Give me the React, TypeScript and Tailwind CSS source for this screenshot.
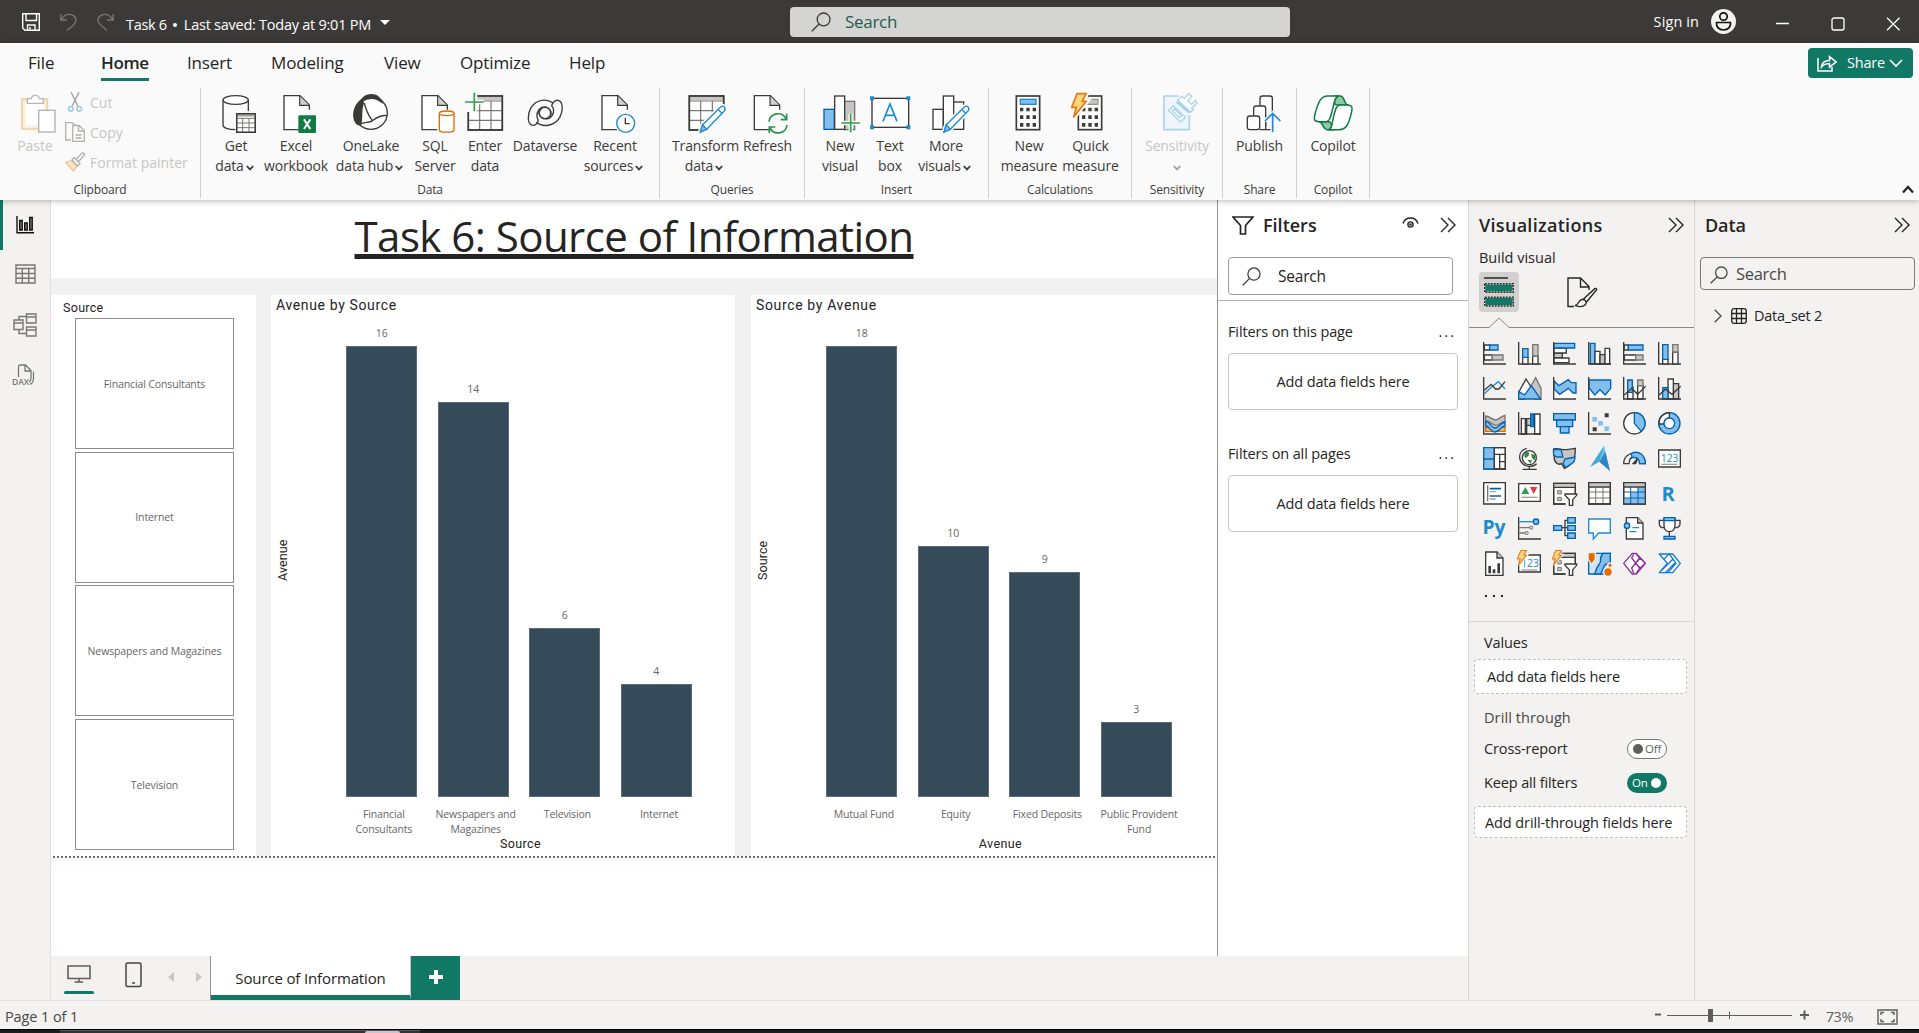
import type { ReactNode } from "react";

const INK = "#3b3a39";
const BLUE = "#83beec";
const EDGE = "#1e8bcd";
const DEEP = "#0063b1";
const GREEN = "#2f9e4f";
const TEAL = "#117865";

/* ---------- shared glyphs ---------- */

function Ico({ children }: { children: ReactNode }) {
  return (
    <svg width="40" height="40" viewBox="0 0 120 120" fill="none" stroke={INK} strokeWidth="4" className="shrink-0 overflow-visible">
      {children}
    </svg>
  );
}

function Page({ x = 19 }: { x?: number }) {
  return (
    <g transform={`translate(${x - 19} 0)`}>
      <path d="M97 52V37L69 8H21V110H97Z" fill="#fff" stroke="none" />
      <path d="M97 50V36L69 8H21V110H68" />
      <path d="M68 9V37H96" fill="#d2d0ce" strokeWidth="3.5" />
    </g>
  );
}

function Plus({ x, y }: { x: number; y: number }) {
  return (
    <g>
      <path d={`M${x - 28} ${y}h56M${x} ${y - 28}v56`} stroke="#fafafa" strokeWidth="13" />
      <path d={`M${x - 28} ${y}h56M${x} ${y - 28}v56`} stroke={GREEN} strokeWidth="5" />
    </g>
  );
}

function Pencil({ x }: { x: number }) {
  return (
    <g transform={`translate(${x} 0)`}>
      <path d="M43 117l7-22L104 42q6-5 11 0 5 6 0 12L62 109Z" fill="#fff" stroke="#fafafa" strokeWidth="14" />
      <path d="M43 117l7-22L104 42q6-5 11 0 5 6 0 12L62 109Z" fill="#fff" stroke={EDGE} strokeLinejoin="round" />
      <path d="M43 117l7-22 12 14Z" fill={BLUE} stroke={EDGE} />
      <path d="M97 50l11 11" stroke={EDGE} />
    </g>
  );
}

function Bolt() {
  return <path d="M18 2H46L33 25H46L8 72L16 43H2Z" fill="#fcd57d" stroke="#e07b1a" strokeWidth="5" strokeLinejoin="round" />;
}

function Caret({ color = INK }: { color?: string }) {
  return (
    <svg width="8" height="6" viewBox="0 0 8 6" fill="none" stroke={color} strokeWidth="1.8" className="mt-1 shrink-0">
      <path d="M.8 1L4 4.4 7.2 1" />
    </svg>
  );
}

function Magnifier({ size, color = INK }: { size: number; color?: string }) {
  return (
    <svg width={size} height={size} viewBox="0 0 20 20" fill="none" stroke={color} strokeWidth="1.3" className="shrink-0">
      <circle cx="12.6" cy="7.4" r="6.4" />
      <path d="M8 12L.8 19.2" />
    </svg>
  );
}

function DoubleChevron() {
  return (
    <svg width="16" height="16" viewBox="0 0 16 16" fill="none" stroke="#252423" strokeWidth="1.4" className="shrink-0">
      <path d="M1 1l7 7-7 7M8 1l7 7-7 7" />
    </svg>
  );
}

/* ---------- ribbon icons ---------- */

const icons: Record<string, ReactNode> = {
  getData: (
    <Ico>
      <path d="M21 22V97C21 104 36 110 58 110M97 22V54" />
      <ellipse cx="59" cy="21" rx="38" ry="13" fill="#fff" />
      <rect x="62" y="62" width="56" height="56" fill="#fff" />
      <path d="M62 66H118" strokeWidth="9" stroke="#a19f9d" />
      <path d="M62 76H118M62 90H118M62 104H118M80 76V118M99 76V118" stroke="#797775" strokeWidth="3" />
      <rect x="62" y="62" width="56" height="56" />
    </Ico>
  ),
  excel: (
    <Ico>
      <Page x={22} />
      <rect x="67" y="67" width="53" height="53" rx="3" fill="#107c41" stroke="none" />
      <path d="M84 79L103 108M103 79L84 108" stroke="#fff" strokeWidth="6" />
    </Ico>
  ),
  oneLake: (
    <Ico>
      <circle cx="60" cy="60" r="49" fill="#fff" />
      <path d="M30 26C38 2 70 0 84 14C90 20 91 24 92 28C74 12 50 14 30 26Z" fill={INK} />
      <path d="M32 24C10 34 2 66 14 88C18 94 22 96 27 95C36 84 28 56 36 34C38 28 36 24 32 24Z" fill={INK} />
      <path d="M40 30C46 56 54 70 64 82M26 95C40 84 52 92 66 82C84 68 94 66 108 68" />
    </Ico>
  ),
  sql: (
    <Ico>
      <Page />
      <path d="M73 62V110C73 120 117 120 117 110V62" fill="#fff" stroke="#fafafa" strokeWidth="12" />
      <path d="M73 62V110C73 120 117 120 117 110V62" fill="#fff" stroke="#e06c00" />
      <ellipse cx="95" cy="61" rx="22" ry="7" fill="#fff" stroke="#e06c00" />
    </Ico>
  ),
  enter: (
    <Ico>
      <rect x="10" y="9" width="102" height="102" fill="#fff" />
      <path d="M10 16H112" strokeWidth="11" stroke="#c8c6c4" />
      <path d="M10 24H112M10 53H112M10 82H112M44 24V111M78 24V111" stroke="#797775" strokeWidth="3.5" />
      <rect x="10" y="9" width="102" height="102" strokeWidth="5" />
      <path d="M-2 -2H37V57H-2Z" fill="#fafafa" stroke="none" />
      <Plus x={28} y={27} />
    </Ico>
  ),
  dataverse: (
    <Ico>
      <path d="M84 30C66 16 34 18 18 44C6 66 8 92 20 96C30 100 38 90 40 82C28 62 44 38 64 42" />
      <path d="M34 88C52 104 88 100 104 74C116 52 114 26 100 22C90 20 82 30 80 38C94 56 80 82 58 77" />
      <circle cx="60" cy="60" r="17" />
      <path d="M64 42C78 46 82 60 76 72M56 78C42 74 38 60 44 48" strokeWidth="3" />
    </Ico>
  ),
  recent: (
    <Ico>
      <Page />
      <circle cx="92" cy="91" r="32" fill="#fafafa" stroke="none" />
      <circle cx="92" cy="91" r="27" fill="#fff" stroke={EDGE} />
      <path d="M91 74V92H104" />
    </Ico>
  ),
  transform: (
    <Ico>
      <rect x="10" y="9" width="103" height="102" fill="#fff" />
      <path d="M10 16H113" strokeWidth="11" stroke="#c8c6c4" />
      <path d="M10 24H113M10 53H113M10 82H113M44 24V111M79 24V111" stroke="#797775" strokeWidth="3.5" />
      <rect x="10" y="9" width="103" height="102" strokeWidth="5" />
      <path d="M66 113H116V40Z" fill="#fafafa" stroke="#fafafa" />
      <Pencil x={0} />
    </Ico>
  ),
  refresh: (
    <Ico>
      <Page x={17} />
      <circle cx="91" cy="91" r="33" fill="#fafafa" stroke="none" />
      <path d="M63 86C66 58 104 54 114 78M116 62V80H98M117 96C114 124 76 128 66 104M64 120V102H82" stroke="#2f9150" strokeWidth="5" />
    </Ico>
  ),
  newVisual: (
    <Ico>
      <rect x="73" y="25" width="31" height="85" fill="#c8c6c4" stroke="#797775" />
      <rect x="12" y="49" width="31" height="60" fill={BLUE} stroke={DEEP} />
      <rect x="44" y="9" width="30" height="100" fill="#fff" />
      <Plus x={92} y={90} />
    </Ico>
  ),
  textBox: (
    <Ico>
      <rect x="6" y="16" width="110" height="87" fill="#fff" />
      <path d="M0 10h12v12H0zM109 10h12v12h-12zM0 97h12v12H0zM109 97h12v12h-12z" fill={EDGE} stroke="none" />
      <path d="M39 85L60 33L81 85M46 67H74" stroke={EDGE} strokeWidth="5" />
    </Ico>
  ),
  moreVisuals: (
    <Ico>
      <g transform="translate(3 0)">
        <rect x="18" y="49" width="31" height="60" fill="#fff" />
        <rect x="79" y="27" width="31" height="82" fill="#fff" />
        <rect x="49" y="9" width="31" height="100" fill="#fff" />
        <Pencil x={8} />
      </g>
    </Ico>
  ),
  measure: (
    <Ico>
      <Calc display={EDGE} fill={BLUE} />
    </Ico>
  ),
  quick: (
    <Ico>
      <Calc display="#979593" fill="#c8c6c4" />
      <path d="M18 2H46L33 25H46L8 72L16 43H2Z" fill="#fafafa" stroke="#fafafa" strokeWidth="16" />
      <Bolt />
    </Ico>
  ),
  sensitivity: (
    <Ico>
      <g stroke="#a9d2ec" strokeWidth="4">
        <path d="M64 9H21V110H97V66" fill="#eff6fb" strokeWidth="5" />
        <path d="M35 53L49 39L85 73L71 87Z" fill="#fff" />
        <path d="M46 54L52 48L74 68L68 74Z" />
        <path d="M62 22L74 10L82 16L94 2L104 10L92 24L104 34L116 22L120 30L104 46L110 50L100 58Z" fill="#fff" />
        <path d="M60 26L98 58" strokeWidth="10" />
      </g>
    </Ico>
  ),
  publish: (
    <Ico>
      <path d="M60 38V16q0-7 7-7H90q7 0 7 7V60" fill="#fff" />
      <path d="M41 68V46q0-7 7-7H70q7 0 7 7V100" fill="#fff" />
      <rect x="22" y="69" width="37" height="41" rx="7" fill="#fff" />
      <path d="M59 110H92M77 82V110" />
      <path d="M98 118V64M75 84L98 61L121 84" stroke="#fafafa" strokeWidth="12" />
      <path d="M98 118V64M75 84L98 61L121 84" stroke={EDGE} strokeWidth="5" />
    </Ico>
  ),
  copilot: (
    <Ico>
      <g stroke="#0f7a45" strokeWidth="4.5" strokeLinejoin="round">
        <path d="M64 9H82C96 9 92 36 106 36H74C60 36 60 12 74 9Z" fill="#8fc7a6" />
        <path d="M24 86H50L66 110H44C28 110 32 88 18 86Z" fill="#8fc7a6" />
        <path d="M76 9H44C22 9 16 30 8 56C0 82 4 86 20 86H38C50 86 52 74 58 52C64 26 66 12 76 9Z" fill="#fff" />
        <path d="M50 110H78C102 110 108 88 114 64C121 40 116 36 100 36H82C70 36 68 48 62 70C56 94 58 108 46 110Z" fill="#fff" />
      </g>
    </Ico>
  ),
};

function Calc({ display, fill }: { display: string; fill: string }) {
  return (
    <g>
      <rect x="22" y="9" width="70" height="101" fill="#fff" strokeWidth="5" />
      <rect x="34" y="19" width="47" height="15" fill={fill} stroke={display} />
      {[44, 67, 90].map((y) => (
        <path key={y} d={`M33 ${y}h10v11h-10zM52 ${y}h10v11h-10zM71 ${y}h10v11h-10z`} fill={INK} stroke="none" />
      ))}
    </g>
  );
}

/* ---------- ribbon ---------- */

function Btn({ icon, lines, w, caret, muted }: { icon: string; lines: string[]; w: string; caret?: boolean; muted?: boolean }) {
  return (
    <div className={`flex shrink-0 flex-col items-center text-[14px] leading-5 whitespace-nowrap ${w} ${muted ? "text-[#c8c6c4]" : "text-[#3b3a39]"}`}>
      {icons[icon]}
      <div className="mt-[3px] tracking-[-0.15px]">{lines[0]}</div>
      <div className={`flex h-5 items-center gap-[2px] tracking-[-0.15px] ${caret && !muted ? "pr-[3px]" : ""}`}>
        {lines[1] && <span>{lines[1]}</span>}
        {caret && <Caret color={muted ? "#a19f9d" : INK} />}
      </div>
    </div>
  );
}

function Group({ label, w, pad, children }: { label: string; w: string; pad?: string; children: ReactNode }) {
  return (
    <div className={`flex h-[110px] shrink-0 flex-col border-r border-[#d2d0ce] ${w}`}>
      <div className={`flex h-[94px] shrink-0 pt-[5px] ${pad ?? ""}`}>{children}</div>
      <div className="text-center text-[12px] leading-4 tracking-[-0.15px] text-[#3b3a39]">{label}</div>
    </div>
  );
}

function Ribbon() {
  return (
    <div className="relative z-10 h-[157px] bg-[#fafafa] shadow-[0_1px_6px_rgba(0,0,0,0.28)]">
      <div className="flex h-[45px] justify-between">
        <div className="flex pl-[28px] text-[17px] leading-10 tracking-[-0.15px] text-[#252423]">
          <div className="w-[73px]">File</div>
          <div className="w-[86px]">
            <div className="h-[38px] w-12 border-b-3 border-[#117865] font-semibold tracking-[-0.37px]">Home</div>
          </div>
          <div className="w-[84px]">Insert</div>
          <div className="w-[113px]">Modeling</div>
          <div className="w-[76px]">View</div>
          <div className="w-[109px]">Optimize</div>
          <div>Help</div>
        </div>
        <div className="mt-[5px] mr-[6px] flex h-[30px] w-[105px] items-center rounded bg-[#117865] pl-[9px] text-[14.5px] tracking-[-0.2px] text-white">
          <svg width="20" height="18" viewBox="0 0 20 18" fill="none" stroke="#fff" strokeWidth="1.5">
            <path d="M1 4V17H15V13M4.500 13C5 8.500 8 6.500 12.500 6.500V2.500L19 8 12.500 13.200V9.500C9 9.500 6.500 10.500 4.500 13Z" />
          </svg>
          <span className="ml-[10px]">Share</span>
          <svg width="14" height="9" viewBox="0 0 14 9" fill="none" stroke="#fff" strokeWidth="1.6" className="ml-1">
            <path d="M1 1l6 6 6-6" />
          </svg>
        </div>
      </div>
      <div className="flex">
        <Group label="Clipboard" w="w-[201px]" pad="pl-[13px]">
          <div className="flex w-[44px] flex-col items-center text-[14px] leading-5 text-[#c8c6c4]">
            <Ico>
              <g transform="translate(3 0)">
                <path d="M18 18H94V108H18Z" fill="#fbeed6" stroke="#f3cda5" strokeWidth="5" />
                <path d="M28 28H84V98H28Z" fill="#fff" stroke="none" />
                <path d="M34 17H46C48 4 68 4 70 17H82V31H34Z" fill="#fff" stroke="#b9b8b7" />
                <rect x="68" y="52" width="49" height="65" fill="#fff" stroke="#b3b0ad" />
              </g>
            </Ico>
            <div className="mt-[3px]">Paste</div>
          </div>
          <div className="-mt-px ml-2 flex flex-col text-[14px] text-[#c8c6c4]">
            <div className="flex h-5 items-center">
              <svg width="20" height="20" viewBox="0 0 20 20" fill="none" stroke="#a19f9d" strokeWidth="1.3">
                <path d="M6 0L13 14.500M14 0L7 14.500" />
                <circle cx="5.800" cy="16.800" r="2.300" stroke="#9ccdf0" strokeWidth="1.600" />
                <circle cx="14.200" cy="16.800" r="2.300" stroke="#9ccdf0" strokeWidth="1.600" />
              </svg>
              <span className="ml-[5px]">Cut</span>
            </div>
            <div className="mt-[10px] flex h-5 items-center">
              <svg width="20" height="20" viewBox="0 0 20 20" fill="none" stroke="#b3b0ad" strokeWidth="1.300">
                <path d="M6 18H.7V.7H7L11 3.500M7.700 3.500H14L19.300 8.500V19.300H7.700ZM13.500 3.500V9H19M10.500 13H16.500M10.500 16H16.500" />
              </svg>
              <span className="ml-[5px]">Copy</span>
            </div>
            <div className="mt-[10px] flex h-5 items-center">
              <svg width="20" height="20" viewBox="0 0 20 20" fill="none" stroke="#b3b0ad" strokeWidth="1.300">
                <path d="M.8 10.500L7 8.500 12 14 8.500 19Z" fill="#fbe3c8" stroke="#f3c296" />
                <path d="M7 8L9 5.500 15 11.500 12.500 14ZM11 7.500L16.500 1.500Q18.500 0 19.500 2 19.500 3 18.500 4L13.500 9.500" />
              </svg>
              <span className="ml-[5px] whitespace-nowrap">Format painter</span>
            </div>
          </div>
        </Group>
        <Group label="Data" w="w-[459px]" pad="pl-[8px]">
          <Btn icon="getData" lines={["Get", "data"]} caret w="w-[54px]" />
          <Btn icon="excel" lines={["Excel", "workbook"]} w="w-[66px]" />
          <Btn icon="oneLake" lines={["OneLake", "data hub"]} caret w="w-[84px]" />
          <Btn icon="sql" lines={["SQL", "Server"]} w="w-[44px]" />
          <Btn icon="enter" lines={["Enter", "data"]} w="w-[56px]" />
          <Btn icon="dataverse" lines={["Dataverse"]} w="w-[64px]" />
          <Btn icon="recent" lines={["Recent", "sources"]} caret w="w-[76px]" />
        </Group>
        <Group label="Queries" w="w-[145px]" pad="pl-[10px]">
          <Btn icon="transform" lines={["Transform", "data"]} caret w="w-[71px]" />
          <Btn icon="refresh" lines={["Refresh"]} w="w-[53px]" />
        </Group>
        <Group label="Insert" w="w-[184px]" pad="pl-[10px]">
          <Btn icon="newVisual" lines={["New", "visual"]} w="w-[50px]" />
          <Btn icon="textBox" lines={["Text", "box"]} w="w-[50px]" />
          <Btn icon="moreVisuals" lines={["More", "visuals"]} caret w="w-[62px]" />
        </Group>
        <Group label="Calculations" w="w-[143px]" pad="pl-[9px]">
          <Btn icon="measure" lines={["New", "measure"]} w="w-[62px]" />
          <Btn icon="quick" lines={["Quick", "measure"]} w="w-[61px]" />
        </Group>
        <Group label="Sensitivity" w="w-[91px]" pad="justify-center">
          <Btn icon="sensitivity" lines={["Sensitivity"]} caret muted w="w-[70px]" />
        </Group>
        <Group label="Share" w="w-[74px]" pad="justify-center">
          <Btn icon="publish" lines={["Publish"]} w="w-[60px]" />
        </Group>
        <Group label="Copilot" w="w-[73px]" pad="justify-center">
          <Btn icon="copilot" lines={["Copilot"]} w="w-[60px]" />
        </Group>
        <svg width="12" height="9" viewBox="0 0 12 9" fill="none" stroke="#252423" strokeWidth="2.200" className="mt-[97px] mr-[5px] ml-auto">
          <path d="M1 7.500L6 2l5 5.500" />
        </svg>
      </div>
    </div>
  );
}

function TitleBar() {
  return (
    <div className="flex h-[43px] items-center bg-[#3b3a38] text-[14.5px] tracking-[-0.3px] text-white">
      <div className="flex w-[790px] items-center pl-[22px]">
        <svg width="18" height="18" viewBox="0 0 18 18" fill="none" stroke="#fff" strokeWidth="1.400">
          <path d="M.7.7H17.300V17.300H3L.7 15ZM4 .7V7.500H14.500V.7M5.500 17V12H13V17M8 14V17" />
        </svg>
        <svg width="17" height="18" viewBox="0 0 17 18" fill="none" stroke="#797775" strokeWidth="1.300" className="ml-5">
          <path d="M.8 1V7H7M1 6.800C4 2 8 .5 12 1.800 17 4 17 8 14 11.500L7 17.500" />
        </svg>
        <svg width="17" height="18" viewBox="0 0 17 18" fill="none" stroke="#797775" strokeWidth="1.300" className="ml-5">
          <path d="M16.200 1V7H10M16 6.800C13 2 9 .5 5 1.800 0 4 0 8 3 11.500L10 17.500" />
        </svg>
        <div className="mt-1.5 ml-[12px] flex items-center">
          <span>Task 6</span>
          <span className="mx-[6px] h-1 w-1 rounded-full bg-white" />
          <span className="ml-px tracking-[-0.25px]">Last saved: Today at 9:01 PM</span>
          <span className="mb-1 ml-[9px] h-0 w-0 border-x-[5px] border-t-[5px] border-x-transparent border-t-white" />
        </div>
      </div>
      <div className="flex h-[30px] w-[500px] items-center rounded-sm bg-[#d4d4d2] pl-[21px]">
        <Magnifier size={20} />
        <span className="ml-[14px] text-[17px] tracking-[-0.3px] text-[#1f5c4f]">Search</span>
      </div>
      <div className="ml-auto flex items-center">
        <span className="tracking-[0.1px]">Sign in</span>
        <svg width="25" height="25" viewBox="0 0 25 25" className="ml-3">
          <circle cx="12.500" cy="12.500" r="12.500" fill="#f3f2f1" />
          <g fill="none" stroke="#111" strokeWidth="1.700">
            <circle cx="12.500" cy="7.500" r="3.700" />
            <path d="M5.500 13.500H19.500C20 18 17 21 12.500 21S5 18 5.500 13.500Z" />
          </g>
        </svg>
        <svg width="125" height="14" viewBox="0 0 125 14" fill="none" stroke="#fff" strokeWidth="1.300" className="mt-1 mr-[18px] ml-10">
          <path d="M0 6.500H13M111 .8L123.500 13.200M123.500 .8L111 13.200" />
          <rect x="56" y="1" width="12" height="12" rx="2" />
        </svg>
      </div>
    </div>
  );
}

/* ---------- report canvas ---------- */

type Bar = { value: number; label: string[] };

const avenueBySource: Bar[] = [
  { value: 16, label: ["Financial", "Consultants"] },
  { value: 14, label: ["Newspapers and", "Magazines"] },
  { value: 6, label: ["Television"] },
  { value: 4, label: ["Internet"] },
];

const sourceByAvenue: Bar[] = [
  { value: 18, label: ["Mutual Fund"] },
  { value: 10, label: ["Equity"] },
  { value: 9, label: ["Fixed Deposits"] },
  { value: 3, label: ["Public Provident", "Fund"] },
];

function Chart({ title, yTitle, xTitle, bars, w }: { title: string; yTitle: string; xTitle: string; bars: Bar[]; w: string }) {
  const max = bars[0].value;
  return (
    <div className={`flex h-full shrink-0 flex-col bg-white ${w}`}>
      <div className="h-5 pl-[5px] font-[Roboto] text-[14px] leading-5 tracking-[0.64px] text-[#252423]">{title}</div>
      <div className="flex">
        <div className="flex h-[482px] w-[65px] items-center pl-[3px]">
          <div className="mt-[8px] h-12 rotate-180 text-center font-[Roboto] text-[12.500px] leading-[18px] tracking-[0.1px] text-[#252423] [writing-mode:vertical-rl]">{yTitle}</div>
        </div>
        <div className="w-[367px]">
          <div className="grid h-[482px] w-[366px] grid-cols-4 items-end">
            {bars.map((b) => (
              <div key={b.value} className="flex flex-col items-center text-[10.5px] leading-[26px] text-[#666]">
                <div>{b.value}</div>
                <div className="w-[71px] border border-[#5c6d79] bg-[#364b59]" style={{ height: (451 * b.value) / max }} />
              </div>
            ))}
          </div>
          <div className="mt-[10px] ml-[2px] grid h-[30px] w-[367px] grid-cols-4 text-center text-[10.5px] leading-[15px] tracking-[-0.15px] whitespace-nowrap text-[#666]">
            {bars.map((b) => (
              <div key={b.value}>
                {b.label.map((l) => (
                  <div key={l}>{l}</div>
                ))}
              </div>
            ))}
          </div>
          <div className="pl-[2px] text-center font-[Roboto] text-[12.500px] leading-[14px] tracking-[0.4px] text-[#252423]">{xTitle}</div>
        </div>
      </div>
    </div>
  );
}

function Canvas() {
  return (
    <div className="flex h-[756px] w-[1166px] flex-col bg-white">
      <div className="h-[78px] shrink-0 text-center text-[42px] leading-[72px] tracking-[-0.53px] text-[#252423]">
        <span className="underline decoration-[4.500px] underline-offset-[2px] [text-decoration-skip-ink:none]">Task 6: Source of Information</span>
      </div>
      <div className="flex h-[578px] shrink-0 justify-between bg-[#f1f1f1] pt-[17px]">
        <div className="flex w-[205px] flex-col bg-white">
          <div className="h-[23px] pl-[12px] font-[Roboto] text-[12.500px] leading-[25px] tracking-[0.3px] text-[#252423]">Source</div>
          <div className="ml-[24px] flex h-[532px] w-[159px] flex-col justify-between">
            {["Financial Consultants", "Internet", "Newspapers and Magazines", "Television"].map((s) => (
              <div key={s} className="flex h-[131px] items-center justify-center border border-[#8c8c8e] pt-[2px] text-[10.5px] tracking-[-0.12px] text-[#666]">
                {s}
              </div>
            ))}
          </div>
        </div>
        <div className="flex justify-between gap-4">
          <Chart title="Avenue by Source" yTitle="Avenue" xTitle="Source" bars={avenueBySource} w="w-[464px]" />
          <Chart title="Source by Avenue" yTitle="Source" xTitle="Avenue" bars={sourceByAvenue} w="w-[466px]" />
        </div>
      </div>
      <div className="ml-[2px] h-[2px] shrink-0 bg-[repeating-linear-gradient(90deg,#6b6b6b_0_2px,#fff_2px_4px)]" />
      <div className="h-[10px] bg-gradient-to-b from-[#f8f8f8] to-white" />
    </div>
  );
}

function PageTabs() {
  return (
    <div className="flex h-[44px] bg-[#f3f2f1]">
      <div className="flex w-[160px] border-r border-[#979593]">
        <div className="ml-[13px] flex w-[30px] flex-col items-center">
          <svg width="24" height="19" viewBox="0 0 24 19" fill="none" stroke="#605e5c" strokeWidth="1.600" className="mt-[8px] mr-px">
            <path d="M1 2H23V14.500H1ZM12 14.500V18M7.500 18H16" />
          </svg>
          <div className="mt-[8px] h-[3px] w-full rounded-sm bg-[#117865]" />
        </div>
        <svg width="17" height="26" viewBox="0 0 17 26" fill="none" stroke="#484644" strokeWidth="1.500" className="mt-[6px] ml-[31px]">
          <rect x="1" y="1" width="15" height="23.500" rx="1.500" />
          <path d="M7 21H10" />
        </svg>
        <svg width="34" height="10" viewBox="0 0 34 10" fill="#c8c6c4" className="mt-[16px] ml-[26px]">
          <path d="M6 0V10L0 5ZM28 0V10L34 5Z" />
        </svg>
      </div>
      <div className="w-[200px] border-r border-b-[5px] border-r-[#c8c6c4] border-b-[#117865] bg-white text-center text-[15px] leading-[45px] font-medium tracking-[-0.14px] text-[#252423]">
        Source of Information
      </div>
      <div className="flex w-[49px] items-center justify-center bg-[#117865] pb-[3px]">
        <svg width="14" height="14" viewBox="0 0 14 14" stroke="#fff" strokeWidth="4">
          <path d="M0 7H14M7 0V14" />
        </svg>
      </div>
    </div>
  );
}

function Rail() {
  return (
    <div className="flex w-[51px] shrink-0 border-r border-[#e1dfdd] bg-[#f3f2f1]">
      <div className="h-[50px] w-[3px] bg-[#117865]" />
      <div className="flex w-[44px] flex-col items-center pt-[16px]">
        <svg width="18" height="18" viewBox="0 0 18 18" fill="none" stroke="#111" strokeWidth="1.400">
          <path d="M1 0V16.700H18" />
          <path d="M3.700 4.500H6.200V14H3.700ZM8.700 7H11.200V14H8.700ZM13.700 1.500H16.200V14H13.700Z" fill="#8a8886" />
        </svg>
        <svg width="21" height="20" viewBox="0 0 21 20" fill="none" stroke="#797775" strokeWidth="1.400" className="mt-[30px]">
          <path d="M1 1H20V19H1ZM1 4.500H20M1 9.500H20M1 14.300H20M7.300 4.500V19M13.700 4.500V19" />
        </svg>
        <svg width="24" height="24" viewBox="0 0 24 24" fill="none" stroke="#797775" strokeWidth="1.400" className="mt-[29px]">
          <path d="M1 7H10V16.500H1ZM1 10H10M13.500 1H23V10H13.500ZM13.500 4H23M13.500 14H23V23H13.500ZM13.500 17H23M6 7V3.500H13.500M6 16.500V20.500H13.500" />
        </svg>
        <svg width="24" height="22" viewBox="0 0 24 22" fill="none" stroke="#797775" strokeWidth="1.300" className="mt-[27px] mr-[3px] overflow-visible">
          <path d="M6.500 13V3Q6.500 1 8.500 1H13.500L19 6.500V14Q19 17 17 18M13 1.500V7H18.500M21.500 7.500V14Q21.500 19 18 20.500" />
          <text x="0" y="20.500" fontSize="8.500" fontWeight="600" fill="#797775" stroke="none" fontFamily="Open Sans, sans-serif">DAX</text>
        </svg>
      </div>
    </div>
  );
}

/* ---------- filters ---------- */

function FilterSection({ title, gap }: { title: string; gap: string }) {
  return (
    <div className={`flex w-[230px] flex-col ${gap}`}>
      <div className="flex h-5 items-center justify-between">
        <span>{title}</span>
        <span className="mr-[2px] mb-px tracking-[2px]">...</span>
      </div>
      <div className="mt-[11px] flex h-[57px] items-center justify-center rounded-sm border border-[#c8c6c4]">Add data fields here</div>
    </div>
  );
}

function Filters() {
  return (
    <div className="h-[756px] w-[251px] border-l border-[#979593] bg-white text-[14.500px] tracking-[-0.13px] text-[#252423]">
      <div className="flex h-[101px] flex-col border-b border-[#b3b0ad]">
        <div className="mt-[13px] flex h-6 items-center pr-[12px] pl-[14px]">
          <svg width="22" height="19" viewBox="0 0 22 19" fill="none" stroke="#252423" strokeWidth="1.700">
            <path d="M1 1H21L13.500 9.500V18H8.500V9.500Z" />
          </svg>
          <span className="ml-[9px] text-[18px] font-semibold tracking-[0px]">Filters</span>
          <svg width="17" height="12" viewBox="0 0 17 12" fill="none" stroke="#252423" strokeWidth="1.400" className="mr-[21px] mb-1 ml-auto">
            <path d="M1 6.500C3.500-.8 13.500-.8 16 6.500" />
            <circle cx="8.500" cy="7.500" r="2.600" />
            <circle cx="8.500" cy="7.500" r="0.600" />
          </svg>
          <DoubleChevron />
        </div>
        <div className="mt-[20px] ml-[10px] flex h-[38px] w-[225px] items-center rounded-sm border border-[#a19f9d] pt-px pl-[13px]">
          <Magnifier size={19} />
          <span className="ml-[17px] text-[15.500px] tracking-[-0.2px]">Search</span>
        </div>
      </div>
      <div className="pl-[10px]">
        <FilterSection title="Filters on this page" gap="mt-[21px]" />
        <FilterSection title="Filters on all pages" gap="mt-[34px]" />
      </div>
    </div>
  );
}

/* ---------- visualizations ---------- */

const A = <path d="M2 0V66H69" stroke={INK} />;
const bolt = (
  <g transform="translate(-3 -6) scale(.62)">
    <path d="M18 2H46L33 25H46L8 72L16 43H2Z" fill="#f3f2f1" stroke="#f3f2f1" strokeWidth="14" />
    <Bolt />
  </g>
);
const slicer = (
  <g>
    <path d="M2 4H67V66H2Z" fill="#fff" />
    <path d="M2 10H67" stroke="#c8c6c4" strokeWidth="9" />
    <path d="M2 4H67V66H2ZM2 16H67" />
    <path d="M14 26H25V36H14ZM14 46H25V56H14Z" fill="#c8c6c4" stroke="#797775" strokeWidth="3" />
    <path d="M38 38H69V72H38Z" fill="#f3f2f1" stroke="none" />
    <path d="M36 36H71V40L59 53V70H49V53L36 40Z" fill="#fff" />
  </g>
);

const visuals: ReactNode[] = [
  <>{A}<path d="M4 9H20V24H4Z" fill="#fff" /><path d="M20 9H45V24H20Z" fill={BLUE} stroke={DEEP} /><path d="M4 39H28V54H4Z" fill="#fff" /><path d="M28 39H60V54H28Z" fill="#c8c6c4" stroke="#797775" /></>,
  <>{A}<path d="M14 46H30V66H14Z" fill="#fff" /><path d="M14 20H30V46H14Z" fill={BLUE} stroke={DEEP} /><path d="M44 42H60V66H44Z" fill="#fff" /><path d="M44 8H60V42H44Z" fill="#c8c6c4" stroke="#797775" /></>,
  <><path d="M3 33H28V48H3Z" fill="#c8c6c4" /><path d="M3 18H40V33H3Z" fill="#fff" /><path d="M3 48H48V62H3Z" fill="#fff" /><path d="M3 4H65V18H3Z" fill={BLUE} stroke={DEEP} />{A}</>,
  <><path d="M7 4H21V66H7Z" fill={BLUE} stroke={DEEP} /><path d="M21 28H36V66H21Z" fill="#fff" /><path d="M36 38H51V66H36Z" fill="#c8c6c4" /><path d="M51 19H65V66H51Z" fill="#fff" />{A}</>,
  <>{A}<path d="M4 9H16V24H4Z" fill="#fff" /><path d="M16 9H60V24H16Z" fill={BLUE} stroke={DEEP} /><path d="M4 39H38V54H4Z" fill="#fff" /><path d="M38 39H60V54H38Z" fill="#c8c6c4" stroke="#797775" /></>,
  <>{A}<path d="M14 52H30V66H14Z" fill="#fff" /><path d="M14 8H30V52H14Z" fill={BLUE} stroke={DEEP} /><path d="M44 30H60V66H44Z" fill="#fff" /><path d="M44 8H60V30H44Z" fill="#c8c6c4" stroke="#797775" /></>,
  <>{A}<path d="M4 50L26 30L46 14L66 36" stroke={EDGE} /><path d="M4 40L24 22L38 36L48 36L66 14" /></>,
  <><path d="M34 36L53 2L69 34V66H50Z" fill="#c8c6c4" stroke="#797775" /><path d="M3 62V44L24 6L46 40L20 66H3Z" fill="#fff" /><path d="M2 44L20 54L40 26L68 66H2Z" fill={BLUE} stroke={DEEP} /></>,
  <><path d="M4 66V38L18 52L46 34L68 48V66Z" fill="#fff" stroke="none" /><path d="M3 12L18 26L46 8L55 17H69V48H60L46 34L20 52L3 36Z" fill={BLUE} stroke={DEEP} />{A}</>,
  <><path d="M4 66V32L20 56L34 40L46 54L68 34V66Z" fill="#fff" stroke="none" /><path d="M3 9H68V34L52 54L36 38L20 54L3 32Z" fill={BLUE} stroke={DEEP} />{A}</>,
  <><path d="M14 30H30V66H14ZM44 26H60V66H44Z" fill="#fff" /><path d="M14 9H28V46H14Z" fill={BLUE} stroke={DEEP} /><path d="M44 9H60V26H44Z" fill="#c8c6c4" stroke="#797775" />{A}<path d="M4 54L26 34L44 52L68 28" /></>,
  <><path d="M46 20H62V66H46Z" fill="#c8c6c4" /><path d="M30 6H46V66H30Z" fill="#fff" /><path d="M14 32H30V66H14Z" fill={BLUE} stroke={DEEP} />{A}<path d="M4 54L22 36L42 52L68 28" /></>,
  <><path d="M8 12C20 12 28 24 38 24S54 12 66 10V28C54 30 48 40 38 40S20 26 8 26Z" fill="#c8c6c4" stroke="#797775" /><path d="M8 46H66V58H8Z" fill="#f5b869" stroke="#e06c00" /><path d="M8 28C22 28 24 48 36 48S54 30 66 30V42C54 42 50 60 36 60S20 42 8 42Z" fill={BLUE} stroke={DEEP} />{A}</>,
  <><path d="M10 20H26V66H10ZM50 6H66V66H50Z" fill="#fff" /><path d="M26 20H40V40H26Z" fill="#c8c6c4" /><path d="M38 6H47V44H38Z" fill={EDGE} stroke={DEEP} />{A}<path d="M22 20V66" /></>,
  <g fill={BLUE} stroke={DEEP}><path d="M2 5H67V24H2Z" /><path d="M11 24H59V44H11Z" /><path d="M22 44H48V63H22Z" /></g>,
  <>{A}<g stroke="none"><path d="M50 4H62V16H50ZM14 46H26V58H14Z" fill={INK} /><path d="M14 16H26V28H14ZM32 28H44V40H32ZM50 44H62V56H50Z" fill={BLUE} stroke="#5aa7dd" strokeWidth="1" /></g></>,
  <><circle cx="34" cy="34" r="32" fill="#fff" /><path d="M34 2A32 32 0 0 1 55 58L34 34Z" fill={BLUE} stroke={DEEP} /></>,
  <><circle cx="34" cy="34" r="32" fill={BLUE} stroke={DEEP} /><path d="M34 2A32 32 0 0 0 3 36H18A16 16 0 0 1 34 18Z" fill="#fff" /><circle cx="34" cy="34" r="16" fill="#fff" stroke={DEEP} /></>,
  <><path d="M2 2H67V66H2Z" fill="#fff" /><path d="M2 2H34V66H2ZM2 36H34" fill={BLUE} stroke={DEEP} /><path d="M34 2H67V66H34ZM34 22H67M50 22V66M50 44H67" /></>,
  <><circle cx="34" cy="32" r="21" fill="#fff" /><path d="M24 16C34 12 36 22 30 28L22 34C18 26 18 20 24 16ZM40 20L52 24V38C44 40 40 30 40 20ZM28 38L42 40L38 50Z" fill="#2f8a3e" stroke="none" /><path d="M26 4C-6 14 0 54 34 58C44 58 52 54 56 50M34 58V66M14 67H56" /></>,
  <><path d="M2 6C14 2 24 8 34 8S56 6 67 4C66 16 68 26 62 38C50 42 60 54 34 64L26 50C14 56 2 44 4 30C2 22 0 12 2 6Z" fill="#c8c6c4" /><path d="M2 8H24L30 30H12L2 24ZM36 36L66 30C66 42 60 48 56 50L38 62L30 50Z" fill={BLUE} stroke={DEEP} /></>,
  <g stroke="none"><path d="M48 -4L6 60L34 44L46 14Z" fill="#41a8d8" /><path d="M48 -4L66 72L34 44Z" fill="#6cc3ea" /><path d="M34 44L66 72L52 14Z" fill="#1766b8" opacity=".7" /></g>,
  <><path d="M2 50C2 8 67 8 67 50H50C50 34 44 30 34 30S18 36 18 50Z" fill="#fff" /><path d="M24 20C48 8 67 24 67 50H50C50 36 42 30 28 32Z" fill={BLUE} stroke={DEEP} /><path d="M30 50L44 34L38 50Z" fill={INK} /></>,
  <><path d="M2 9H67V60H2Z" fill="#fff" /><text x="35" y="46" fontSize="31" textAnchor="middle" fill={EDGE} stroke="none" fontFamily="Open Sans, sans-serif">123</text><path d="M10 52H58" stroke="#a19f9d" /></>,
  <><path d="M2 2H67V66H2Z" fill="#fff" /><path d="M14 10V58" stroke="#797775" /><path d="M20 20H54M20 42H54" stroke={DEEP} strokeWidth="5" /><path d="M20 29H38M20 51H38" stroke="#a19f9d" /></>,
  <><path d="M2 5H67V58H2Z" fill="#fff" /><path d="M10 36L22 15L34 36Z" fill="#2f9e4f" stroke="none" /><path d="M36 15H58L47 36Z" fill="#e03c3c" stroke="none" /><path d="M10 46H58" stroke="#a19f9d" /></>,
  slicer,
  <><path d="M2 2H67V66H2Z" fill="#fff" /><path d="M2 8H67" stroke="#c8c6c4" strokeWidth="9" /><path d="M2 30H67M2 48H67M23 16V66M45 16V66" stroke="#797775" strokeWidth="3" /><path d="M2 2H67V66H2ZM2 15H67" /></>,
  <><path d="M2 2H67V66H2Z" fill="#fff" /><path d="M2 8H67" stroke="#c8c6c4" strokeWidth="9" /><path d="M44 15H67V66H44ZM2 48H67V66H2ZM23 30H44V48H23Z" fill={BLUE} stroke="none" /><path d="M2 30H67M2 48H67M23 16V66M45 16V66" stroke={DEEP} strokeWidth="3" /><path d="M2 2H67V66H2ZM2 15H67" /></>,
  <text x="30" y="56" fontSize="60" fontWeight="700" textAnchor="middle" fill={EDGE} stroke="none" fontFamily="Open Sans, sans-serif">R</text>,
  <text x="33" y="50" fontSize="58" fontWeight="700" textAnchor="middle" fill={EDGE} stroke="none" fontFamily="Open Sans, sans-serif">Py</text>,
  <>{A}<path d="M4 14H46" stroke={EDGE} /><circle cx="54" cy="14" r="8" fill={BLUE} stroke={DEEP} /><path d="M4 32H36M4 48H22" stroke="#797775" /><path d="M36 28H44V36H36ZM22 44H30V52H22Z" stroke="#797775" fill="#fff" strokeWidth="3" /></>,
  <><path d="M26 32H42M44 10H36V56H44" /><g fill={BLUE} stroke={DEEP}><path d="M2 26H26V40H2ZM44 2H67V18H44ZM44 26H67V40H44ZM44 48H67V64H44Z" /></g></>,
  <path d="M2 6H67V48H32L16 66V48H2Z" fill="#fff" stroke={EDGE} />,
  <><path d="M10 22V2H44L60 18V66H10V34" fill="#fff" /><path d="M44 2V18H60" fill="#c8c6c4" /><circle cx="12" cy="26" r="8" fill={BLUE} stroke={DEEP} /><path d="M28 32H48M20 44H40" stroke={EDGE} /></>,
  <><path d="M16 10H4V20Q4 32 18 32M52 10H66V20Q66 32 50 32" /><path d="M18 4H51V24C51 40 44 44 34 44S18 40 18 24ZM34 44V58" fill="#fff" /><path d="M18 2H51V11H18ZM18 58H51V66H18Z" fill={BLUE} stroke={DEEP} /></>,
  <><path d="M8 0H42L60 18V70H8Z" fill="#fff" /><path d="M42 0V18H60" fill="#c8c6c4" /><path d="M16 42H24V64H16ZM29 52H37V64H29ZM43 34H51V64H43Z" fill={INK} stroke="none" /></>,
  <><path d="M2 9H67V60H2Z" fill="#fff" /><text x="36" y="46" fontSize="31" textAnchor="middle" fill={EDGE} stroke="none" fontFamily="Open Sans, sans-serif">123</text><path d="M10 54H58" stroke="#a19f9d" />{bolt}</>,
  <>{slicer}{bolt}</>,
  <><path d="M2 4H67V66H2Z" fill="#cfe5f6" stroke={DEEP} /><path d="M46 4C30 18 44 24 34 36S26 50 20 66H38L50 40L67 30V4Z" fill={BLUE} stroke={DEEP} /><path d="M0 2H22V22L11 38L0 22Z" fill="#e06c00" stroke="#f3f2f1" /><circle cx="60" cy="60" r="13" fill="#e06c00" stroke="#f3f2f1" /><circle cx="66" cy="40" r="7" fill="#e06c00" stroke="#f3f2f1" /></>,
  <g stroke="#8f2f9c" fill="#fff" strokeLinejoin="round"><path d="M2 34L28 4H40L67 34L40 66H28Z" /><path d="M32 6L26 18L50 48L40 64M40 6L50 18L26 48L32 64M38 34L52 18L67 34L52 48Z" fill="none" /></g>,
  <g stroke="#0f78d4" fill="#fff" strokeLinejoin="round"><path d="M4 6H44L67 34L44 62H4L28 34Z" /><path d="M18 22L32 6M34 6L54 34L30 62M12 54L46 20M22 62L50 34" fill="none" /></g>,
];

function Visualizations() {
  return (
    <div className="flex w-[226px] shrink-0 flex-col border-l border-[#d8d6d4] bg-[#f3f2f1] text-[14.500px] tracking-[-0.13px] text-[#252423]">
      <div className="mt-[13px] flex h-6 items-center justify-between pr-[10px] pl-[10px]">
        <span className="text-[18px] font-semibold tracking-[0.3px]">Visualizations</span>
        <DoubleChevron />
      </div>
      <div className="mt-[11px] pl-[10px] leading-5 font-medium tracking-[0px]">Build visual</div>
      <div className="mt-1 flex pl-[10px]">
        <div className="flex h-10 w-10 items-center justify-center rounded-sm bg-[#d2d0ce]">
          <svg width="30" height="30" viewBox="0 0 30 30" stroke="#252423">
            <path d="M0 1H24" strokeWidth="1.500" />
            <path d="M.7 6.700H29.300V15.300H.7ZM.7 20.200H29.300V29H.7Z" fill={TEAL} stroke="#f3f2f1" strokeWidth="1.400" />
            <path d="M.7 6.700H29.300V15.300H.7ZM.7 20.200H29.300V29H.7Z" fill="none" strokeWidth="1.400" strokeDasharray="2 1" />
          </svg>
        </div>
        <svg width="31" height="31" viewBox="0 0 31 31" fill="none" stroke="#252423" strokeWidth="1.400" className="mt-[5px] ml-[48px]">
          <path d="M7 29.500H1V1H13.500L22 9.500V13M13.500 1V10H22" />
          <path d="M8 28.500C12 28 11 23 15 22.500C19 22 20 26 18 28C15 31 11 29.500 8 28.500ZM16 22.500L28 11.500Q30 11 29.500 13L19.500 25" />
        </svg>
      </div>
      <svg width="225" height="11" viewBox="0 0 225 11" fill="none" stroke="#8a8886" className="mt-[5px] shrink-0">
        <path d="M0 10.500H20L30 1L40 10.500H225" />
      </svg>
      <div className="mt-[14px] ml-[14px] grid w-[210px] grid-cols-6">
        {visuals.map((v, i) => (
          <div key={i} className="h-[35px]">
            <svg width="23" height="23" viewBox="0 0 69 69" fill="none" stroke={INK} strokeWidth="4" className="overflow-visible">
              {v}
            </svg>
          </div>
        ))}
      </div>
      <div className="flex h-[35px] items-center gap-[6px] border-b border-[#d8d6d4] pb-[17px] pl-[16px]">
        <i className="h-[2px] w-[2px] bg-[#252423]" />
        <i className="h-[2px] w-[2px] bg-[#252423]" />
        <i className="h-[2px] w-[2px] bg-[#252423]" />
      </div>
      <div className="mt-[11px] pl-[15px] leading-5">Values</div>
      <div className="mt-[6px] ml-[5px] h-[35px] w-[213px] rounded-sm border border-dashed border-[#c0bebc] bg-white pl-[12px] leading-[33px]">Add data fields here</div>
      <div className="mt-[14px] pl-[15px] leading-5 font-medium tracking-[0.1px] text-[#484644]">Drill through</div>
      <div className="mt-[11px] flex h-5 items-center justify-between pr-[27px] pl-[15px]">
        <span>Cross-report</span>
        <span className="flex h-5 w-10 items-center gap-[2px] rounded-full border border-[#797775] bg-white pl-[5px] text-[11.500px] text-[#605e5c]">
          <i className="h-[10px] w-[10px] rounded-full bg-[#605e5c]" />
          Off
        </span>
      </div>
      <div className="mt-[14px] flex h-5 items-center justify-between pr-[27px] pl-[15px]">
        <span>Keep all filters</span>
        <span className="flex h-5 w-10 items-center justify-between rounded-full bg-[#117865] pr-[6px] pl-[5px] text-[11.500px] text-white">
          On
          <i className="h-[10px] w-[10px] rounded-full bg-white" />
        </span>
      </div>
      <div className="mt-[13px] ml-[5px] h-8 w-[213px] rounded-sm border border-dashed border-[#c0bebc] bg-white pl-[10px] leading-[31px] tracking-[-0.1px]">Add drill-through fields here</div>
    </div>
  );
}

/* ---------- data ---------- */

function DataPane() {
  return (
    <div className="flex grow flex-col border-l border-[#d8d6d4] bg-[#f3f2f1] text-[#252423]">
      <div className="mt-[13px] flex h-6 items-center justify-between pr-[9px] pl-[10px]">
        <span className="text-[18px] font-semibold tracking-[-0.1px]">Data</span>
        <DoubleChevron />
      </div>
      <div className="mt-[20px] ml-[5px] flex h-[33px] w-[215px] items-center rounded-sm border border-[#797775] pt-[2px] pl-[9px]">
        <Magnifier size={18} />
        <span className="ml-2 text-[16.500px] tracking-[-0.3px] text-[#484644]">Search</span>
      </div>
      <div className="mt-4 flex h-5 items-center pl-[19px]">
        <svg width="8" height="14" viewBox="0 0 8 14" fill="none" stroke="#484644" strokeWidth="1.300">
          <path d="M.7 .7L7 7 .7 13.300" />
        </svg>
        <svg width="16" height="16" viewBox="0 0 16 16" fill="none" stroke="#252423" strokeWidth="1.300" className="ml-[9px]">
          <rect x=".7" y=".7" width="14.600" height="14.600" rx="2.500" />
          <path d="M5.500 1V15M10.500 1V15M1 5.500H15M1 10.500H15" />
        </svg>
        <span className="ml-[7px] text-[14.500px] tracking-[-0.25px]">Data_set 2</span>
      </div>
    </div>
  );
}

function StatusBar() {
  return (
    <div className="flex h-[29px] items-center border-t border-[#e1dfdd] bg-[#f3f2f1] pt-[3px] text-[14.500px] tracking-[-0.1px] text-[#484644]">
      <span className="pl-[5px]">Page 1 of 1</span>
      <svg width="154" height="14" viewBox="0 0 154 14" stroke="#605e5c" className="mr-[17px] mb-[3px] ml-auto">
        <path d="M0 6.500H6M145 7H154M149.500 2.500V11.500" strokeWidth="2" />
        <path d="M12 7.500H137M74.500 3.500V11" />
        <path d="M55.500 1V14" strokeWidth="5" />
      </svg>
      <span className="tracking-[-0.4px] text-[#605e5c]">73%</span>
      <svg width="21" height="16" viewBox="0 0 21 16" fill="none" stroke="#605e5c" strokeWidth="1.400" className="mr-[21px] ml-[24px]">
        <path d="M1 1H20V15H1ZM4 6V3.500H7M14 3.500H17V6M17 10V12.500H14M7 12.500H4V10" />
      </svg>
    </div>
  );
}

export default function App() {
  return (
    <div className="flex h-[1033px] w-full flex-col overflow-hidden bg-[#f3f2f1] font-['Open_Sans','Noto_Sans',sans-serif]">
      <TitleBar />
      <Ribbon />
      <div className="flex h-[800px] shrink-0">
        <Rail />
        <div className="w-[1417px] shrink-0">
          <div className="flex">
            <Canvas />
            <Filters />
          </div>
          <PageTabs />
        </div>
        <Visualizations />
        <DataPane />
      </div>
      <StatusBar />
      <div className="flex h-1 border-t border-black bg-[#1c1b1d] pl-[60px]">
        <div className="flex w-[360px] border-t border-[#55555a] bg-[#333336] pl-[305px]">
          <div className="w-[35px] rounded-t-full bg-[#c8c6cc]" />
        </div>
      </div>
    </div>
  );
}
